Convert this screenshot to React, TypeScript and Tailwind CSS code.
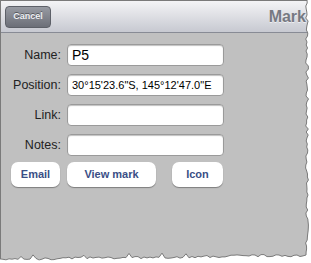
import React from "react";

function tornPoints() {
  // jagged right edge then bottom edge
  const right: [number, number][] = [];
  let seed = 7;
  const rnd = () => {
    seed = (seed * 9301 + 49297) % 233280;
    return seed / 233280;
  };
  for (let y = 0; y <= 254; y += 3) {
    right.push([305.5 + rnd() * 3, y]);
  }
  const bottom: [number, number][] = [];
  for (let x = 306; x >= 0; x -= 3) {
    const base = 254 + (306 - x) * 0.013;
    bottom.push([x, base + rnd() * 2.5 - (rnd() > 0.9 ? 3 : 0)]);
  }
  return [...right, ...bottom];
}

function TornEdge() {
  const pts = tornPoints();
  const line = pts.map((p) => `${p[0].toFixed(1)},${p[1].toFixed(1)}`).join(" ");
  const fill = `311,0 ${line} 0,263 311,263`;
  return (
    <svg className="absolute inset-0" width="311" height="263" viewBox="0 0 311 263">
      <polygon points={fill} fill="#ffffff" />
      <polyline points={line} fill="none" stroke="#7a7a7a" strokeWidth="1" />
    </svg>
  );
}

function Row({ label, value, small }: { label: string; value?: string; small?: boolean }) {
  return (
    <div className="flex items-center h-[22px]">
      <span className="w-[61px] text-right pr-[1px] text-[12.5px] text-[#222]">{label}</span>
      <div className="ml-[5px] w-[157px] h-[22px] bg-white rounded-[4px] border border-[#9a9a9a] shadow-[inset_0_1px_1px_rgba(0,0,0,0.25)] flex items-center px-[4px]">
        {value && (
          <span className={small ? "text-[11px] text-black" : "text-[14px] text-black"}>{value}</span>
        )}
      </div>
    </div>
  );
}

function Btn({ children, w }: { children: React.ReactNode; w: string }) {
  return (
    <div
      className={`${w} h-[25px] bg-white rounded-[7px] flex items-center justify-center shadow-[0_1px_1px_rgba(0,0,0,0.35)] text-[11px] font-bold text-[#3a4f86]`}
    >
      {children}
    </div>
  );
}

export default function App() {
  return (
    <div
      className="relative w-[311px] h-[263px] bg-white overflow-hidden"
      style={{ fontFamily: '"Liberation Sans", Arial, sans-serif' }}
    >
      <div className="w-[309px] h-[259px] border-l border-t border-[#7a7a7a] bg-[#c0c0c0] flex flex-col">
        <div className="h-[32px] bg-gradient-to-b from-[#f4f4f6] to-[#c7c9d1] border-b border-[#888b95] flex items-center justify-between pl-[4px] pr-[3px]">
          <div className="w-[46px] h-[22px] rounded-[4px] bg-gradient-to-b from-[#989ba3] to-[#6c6f78] border border-[#5d6068] flex items-center justify-center text-[9px] font-bold text-[#eef0f3] [text-shadow:0_-1px_0_rgba(0,0,0,0.4)]">
            Cancel
          </div>
          <span className="text-[16px] font-bold text-[#767982] [text-shadow:0_1px_0_rgba(255,255,255,0.6)] mt-[1px]">
            Mark
          </span>
        </div>
        <div className="flex flex-col gap-[8px] pt-[11px]">
          <Row label="Name:" value="P5" />
          <Row label="Position:" value={"30°15'23.6\"S, 145°12'47.0\"E"} small />
          <Row label="Link:" />
          <Row label="Notes:" />
        </div>
        <div className="flex mt-[6px] pl-[10px]">
          <Btn w="w-[49px]">Email</Btn>
          <div className="ml-[7px]">
            <Btn w="w-[89px]">View mark</Btn>
          </div>
          <div className="ml-[16px]">
            <Btn w="w-[51px]">Icon</Btn>
          </div>
        </div>
      </div>
      <TornEdge />
    </div>
  );
}
